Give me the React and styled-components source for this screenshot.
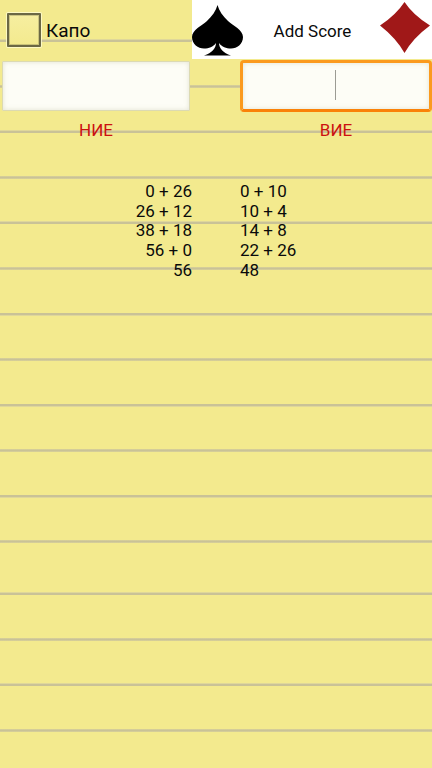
import React from "react";
import styled, { createGlobalStyle } from "styled-components";

const Global = createGlobalStyle`
  html, body { margin: 0; padding: 0; }
  body { font-family: Roboto, "Liberation Sans", sans-serif; }
`;

const lineStops = `
  transparent 0, transparent 39.5px,
  #dfd79a 39.5px, #c9c297 40.5px, #c9c297 41.5px, #dfd79a 42.5px,
  transparent 42.5px, transparent 45.5px`;

const Paper = styled.div`
  width: 432px;
  height: 768px;
  overflow: hidden;
  background-color: #f3ea8e;
  background-image:
    repeating-linear-gradient(to bottom, ${lineStops}),
    repeating-linear-gradient(to bottom, ${lineStops});
  background-size: 100% 564px, 100% 204px;
  background-position: 0 0, 0 552.5px;
  background-repeat: no-repeat;
  color: #0a0a0a;
`;

const Header = styled.header`
  display: grid;
  grid-template-columns: 192px 240px;
  height: 59px;
`;

const CaptainRow = styled.label`
  display: flex;
  align-items: center;
  gap: 5px;
  padding: 1px 0 0 7px;
  font-size: 19px;
`;

const Checkbox = styled.span`
  box-sizing: border-box;
  width: 34px;
  height: 34px;
  border: 2px solid #6b6844;
  border-radius: 1px;
  background: linear-gradient(#f6eea0, #f3ea8e);
  box-shadow:
    0 0 0 1px rgba(255, 252, 210, 0.8),
    inset 0 0 0 1px rgba(107, 104, 68, 0.3);
`;

const ScoreBar = styled.div`
  display: flex;
  align-items: center;
  justify-content: space-between;
  background: #fff;
  padding-right: 2px;
`;

const ScoreButton = styled.span`
  font-size: 17px;
  color: #0a0a0a;
  padding: 2px 0 0 1px;
`;

const SuitIcon = styled.svg`
  display: block;
  flex: none;
`;

const Inputs = styled.div`
  display: grid;
  grid-template-columns: 192px 192px;
  column-gap: 48px;
  height: 52px;
`;

const ScoreField = styled.div`
  box-sizing: border-box;
  position: relative;
  height: ${(p) => (p.$focused ? "52px" : "50px")};
  margin: ${(p) => (p.$focused ? "1px 0 0" : "2px 2px 0")};
  background: #fdfdf6;
  border-radius: ${(p) => (p.$focused ? "4px" : "1px")};
  border: ${(p) => (p.$focused ? "3px solid transparent" : "1px solid #dcdab2")};
  border-color: ${(p) => (p.$focused ? "#fb9a1e #fb9a1e #fa8208 #fb9a1e" : "#dcdab2")};
  box-shadow: inset 0 0 5px rgba(180, 180, 150, 0.35);
`;

const Caret = styled.span`
  position: absolute;
  left: 92px;
  top: 7px;
  width: 1px;
  height: 30px;
  background: #9c9c94;
`;

const Teams = styled.div`
  display: grid;
  grid-template-columns: 192px 192px;
  column-gap: 48px;
  padding-top: 9px;
`;

const TeamName = styled.div`
  text-align: center;
  font-size: 17px;
  line-height: 20px;
  color: #cc1111;
`;

const Totals = styled.div`
  display: grid;
  grid-template-columns: 192px 192px;
  column-gap: 48px;
  padding-top: 42px;
`;

const TotalsColumn = styled.div`
  text-align: ${(p) => p.$align};
  font-size: 17px;
  line-height: 19.7px;
  color: #0a0a0a;
`;

const Line = styled.div``;

const nie = ["0 + 26", "26 + 12", "38 + 18", "56 + 0", "56"];
const vie = ["0 + 10", "10 + 4", "14 + 8", "22 + 26", "48"];

export default function App() {
  return (
    <Paper>
      <Global />
      <Header>
        <CaptainRow>
          <Checkbox />
          Капо
        </CaptainRow>
        <ScoreBar>
          <SuitIcon width="52" height="59" viewBox="0 0 52 59">
            <path
              fill="#000"
              d="M25.5 5 C24 11 20 16 15 21 C10 25.5 0 30 0 37 C0 44 6 48.5 12 48.5 C17 48.5 21 47 24 43 C24 48 20 53 12 55.5 L39 55.5 C31 53 27 48 27 43 C30 47 34 48.5 39 48.5 C45 48.5 51 44 51 37 C51 30 41 25.5 36 21 C31 16 27 11 25.5 5 Z"
            />
          </SuitIcon>
          <ScoreButton>Add Score</ScoreButton>
          <SuitIcon width="50" height="59" viewBox="0 0 50 59">
            <path fill="#a01818" d="M24.5 2 Q33 15 50 25.5 Q33 38 24.5 53 Q16 38 0 25.5 Q16 15 24.5 2 Z" />
          </SuitIcon>
        </ScoreBar>
      </Header>
      <Inputs>
        <ScoreField />
        <ScoreField $focused>
          <Caret />
        </ScoreField>
      </Inputs>
      <Teams>
        <TeamName>НИЕ</TeamName>
        <TeamName>ВИЕ</TeamName>
      </Teams>
      <Totals>
        <TotalsColumn $align="right">
          {nie.map((t) => (
            <Line key={t}>{t}</Line>
          ))}
        </TotalsColumn>
        <TotalsColumn $align="left">
          {vie.map((t) => (
            <Line key={t}>{t}</Line>
          ))}
        </TotalsColumn>
      </Totals>
    </Paper>
  );
}
